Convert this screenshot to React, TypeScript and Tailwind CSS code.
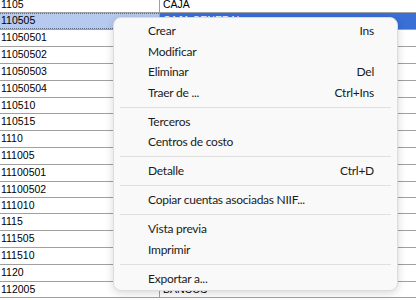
import React from "react";

const rows: { code: string; name: string; h: number }[] = [
  { code: "1105", name: "CAJA", h: 13 },
  { code: "110505", name: "CAJA GENERAL", h: 17 },
  { code: "11050501", name: "", h: 17 },
  { code: "11050502", name: "", h: 17 },
  { code: "11050503", name: "", h: 17 },
  { code: "11050504", name: "", h: 17 },
  { code: "110510", name: "", h: 16 },
  { code: "110515", name: "", h: 17 },
  { code: "1110", name: "", h: 17 },
  { code: "111005", name: "", h: 17 },
  { code: "11100501", name: "", h: 17 },
  { code: "11100502", name: "", h: 16 },
  { code: "111010", name: "", h: 16 },
  { code: "1115", name: "", h: 17 },
  { code: "111505", name: "", h: 17 },
  { code: "111510", name: "", h: 17 },
  { code: "1120", name: "", h: 17 },
  { code: "112005", name: "BANCOS", h: 16 },
];

type Item = { label: string; shortcut?: string } | "sep";

const menu: Item[] = [
  { label: "Crear", shortcut: "Ins" },
  { label: "Modificar" },
  { label: "Eliminar", shortcut: "Del" },
  { label: "Traer de ...", shortcut: "Ctrl+Ins" },
  "sep",
  { label: "Terceros" },
  { label: "Centros de costo" },
  "sep",
  { label: "Detalle", shortcut: "Ctrl+D" },
  "sep",
  { label: "Copiar cuentas asociadas NIIF..." },
  "sep",
  { label: "Vista previa" },
  { label: "Imprimir" },
  "sep",
  { label: "Exportar a..." },
];

export default function App() {
  return (
    <div className="relative w-[416px] h-[300px] overflow-hidden bg-white">
      <div
        className="flex flex-col text-[10.5px] text-black"
        style={{ fontFamily: '"Liberation Sans", Arial, sans-serif' }}
      >
        {rows.map((r, i) => {
          const sel = i === 1;
          const first = i === 0;
          return (
            <div
              key={i}
              className={`flex shrink-0 border-b border-[#a0a0a0] ${
                r.h === 13 ? "h-[13px]" : r.h === 16 ? "h-[16px]" : "h-[17px]"
              }`}
            >
              <div
                className={`w-[159px] shrink-0 flex items-center pl-[1px] ${
                  first ? "pb-[2px]" : ""
                } ${
                  sel
                    ? "bg-[#b6c9ef] border-y border-dotted border-[#5a6a8a]"
                    : ""
                }`}
              >
                {r.code}
              </div>
              <div
                className={`flex-1 flex items-center pl-[3px] border-l border-[#a0a0a0] ${
                  first ? "pb-[2px]" : ""
                } ${sel ? "bg-[#3a6fd6] text-white" : ""}`}
              >
                {r.name}
              </div>
            </div>
          );
        })}
      </div>

      <div
        className="absolute left-[113px] top-[17px] w-[285px] rounded-[8px] border border-[#dcdcdc] bg-[#f9f9f9] shadow-[0_2px_8px_rgba(0,0,0,0.16)] pt-[3px] pb-[1px] text-[12px] tracking-[-0.25px] text-[#1b1b1b]"
        style={{ fontFamily: 'Lato, "Noto Sans", sans-serif' }}
      >
        {menu.map((m, i) =>
          m === "sep" ? (
            <div key={i} className="h-[8.5px] flex items-center px-[6px]">
              <div className="h-px w-full bg-[#e0e0e0]" />
            </div>
          ) : (
            <div
              key={i}
              className="h-[20.5px] flex items-center justify-between pl-[34px] pr-[23px]"
            >
              <span>{m.label}</span>
              {m.shortcut && <span>{m.shortcut}</span>}
            </div>
          )
        )}
      </div>
    </div>
  );
}
